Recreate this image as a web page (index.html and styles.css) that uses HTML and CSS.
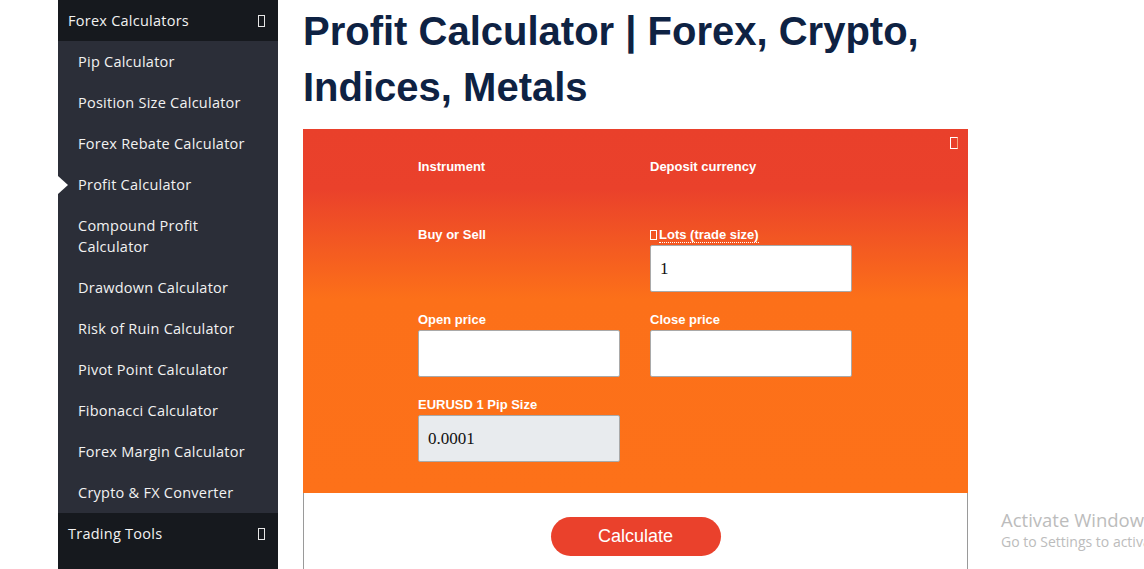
FILE: index.html
```html
<!DOCTYPE html>
<html lang="en">
<head>
<meta charset="utf-8">
<title>Profit Calculator</title>
<link rel="stylesheet" href="styles.css">
</head>
<body>
<div class="page">
  <aside class="sidebar">
    <div class="side-head"><span>Forex Calculators</span><span class="tofu"></span></div>
    <ul class="side-list">
      <li class="side-item">Pip Calculator</li>
      <li class="side-item">Position Size Calculator</li>
      <li class="side-item">Forex Rebate Calculator</li>
      <li class="side-item active">Profit Calculator</li>
      <li class="side-item">Compound Profit Calculator</li>
      <li class="side-item">Drawdown Calculator</li>
      <li class="side-item">Risk of Ruin Calculator</li>
      <li class="side-item">Pivot Point Calculator</li>
      <li class="side-item">Fibonacci Calculator</li>
      <li class="side-item">Forex Margin Calculator</li>
      <li class="side-item">Crypto &amp; FX Converter</li>
    </ul>
    <div class="side-head side-head-last"><span>Trading Tools</span><span class="tofu"></span></div>
  </aside>
  <main class="main">
    <h1 class="title">Profit Calculator | Forex, Crypto, Indices, Metals</h1>
    <section class="calc">
      <div class="calc-top">
        <span class="corner-icon"></span>
        <div class="form">
          <div class="field"><label class="lbl">Instrument</label><div class="placeholder"></div></div>
          <div class="field"><label class="lbl">Deposit currency</label><div class="placeholder"></div></div>
          <div class="field"><label class="lbl">Buy or Sell</label></div>
          <div class="field"><label class="lbl"><span class="tofu-sm"></span><span class="dotted">Lots (trade size)</span></label><input class="inp" type="text" value="1"></div>
          <div class="field"><label class="lbl">Open price</label><input class="inp" type="text" value=""></div>
          <div class="field"><label class="lbl">Close price</label><input class="inp" type="text" value=""></div>
          <div class="field"><label class="lbl">EURUSD 1 Pip Size</label><input class="inp inp-ro" type="text" value="0.0001" readonly></div>
        </div>
      </div>
      <div class="calc-bottom">
        <button class="btn" type="button">Calculate</button>
      </div>
    </section>
  </main>
</div>
<div class="watermark">
  <div class="wm-1">Activate Windows</div>
  <div class="wm-2">Go to Settings to activate Windows.</div>
</div>
</body>
</html>
```
FILE: styles.css
```css
html, body {
  margin: 0;
  padding: 0;
  background: #ffffff;
  overflow: hidden;
  height: 569px;
}
.page {
  display: flex;
  gap: 25px;
  padding-left: 58px;
  height: 569px;
}
.sidebar {
  width: 220px;
  flex: 0 0 220px;
  display: flex;
  flex-direction: column;
  background: #2b2e38;
  font-family: "Open Sans", sans-serif;
  font-size: 14.5px;
  letter-spacing: 0.25px;
  color: #f2f2f2;
}
.side-head {
  background: #16191e;
  height: 41px;
  line-height: 21px;
  display: flex;
  align-items: center;
  justify-content: space-between;
  padding: 0 13px 0 10px;
  box-sizing: border-box;
  flex: 0 0 auto;
}
.side-head-last {
  flex: 1 1 auto;
  align-items: flex-start;
  padding-top: 10px;
}
.side-head-last .tofu {
  margin-top: 5px;
}
.tofu {
  display: inline-block;
  width: 5px;
  height: 10px;
  border: 1px solid #e6e6e6;
}
.side-list {
  list-style: none;
  margin: 0;
  padding: 0;
}
.side-item {
  position: relative;
  padding: 10px 30px 10px 20px;
  line-height: 21px;
}
.side-item.active::before {
  content: "";
  position: absolute;
  left: 0;
  top: 50%;
  margin-top: -9px;
  border-top: 9px solid transparent;
  border-bottom: 9px solid transparent;
  border-left: 10px solid #ffffff;
}
.main {
  width: 665px;
  flex: 0 0 665px;
}
.title {
  margin: 3px 0 14px 0;
  font-family: "Liberation Sans", Arial, sans-serif;
  font-weight: bold;
  font-size: 40px;
  line-height: 56px;
  color: #0e2243;
}
.calc {
  width: 665px;
}
.calc-top {
  position: relative;
  background: linear-gradient(to bottom, #e9402b 0px, #ea412b 60px, #fc7019 170px, #fd7119 100%);
  padding: 29px 0 31px 0;
}
.corner-icon {
  position: absolute;
  right: 10px;
  top: 8px;
  width: 6px;
  height: 10px;
  border: 1px solid #ffffff;
  border-right-color: #f7a37a;
}
.form {
  width: 434px;
  margin: 0 0 0 115px;
  display: grid;
  grid-template-columns: 202px 202px;
  column-gap: 30px;
  row-gap: 19px;
}
.field {
  display: flex;
  flex-direction: column;
}
.lbl {
  font-family: "Liberation Sans", Arial, sans-serif;
  font-weight: bold;
  font-size: 13px;
  line-height: 17px;
  color: #ffffff;
  margin-bottom: 2px;
}
.placeholder {
  height: 30px;
}
.tofu-sm {
  display: inline-block;
  width: 5px;
  height: 8px;
  border: 1px solid #ffffff;
  margin-right: 2px;
  vertical-align: -1px;
}
.dotted {
  border-bottom: 1px dotted #ffffff;
}
.inp {
  box-sizing: border-box;
  width: 202px;
  height: 47px;
  border: 1px solid #a9a9a9;
  border-radius: 2px;
  background: #ffffff;
  padding: 0 9px;
  font-family: "Liberation Serif", "Times New Roman", serif;
  font-size: 17px;
  color: #111111;
  outline: none;
}
.inp-ro {
  background: #e8ebee;
}
.calc-bottom {
  background: #ffffff;
  border-left: 1px solid #9a9a9a;
  border-right: 1px solid #9a9a9a;
  padding-top: 24px;
  height: 80px;
  display: flex;
  justify-content: center;
  align-items: flex-start;
}
.btn {
  width: 170px;
  height: 39px;
  border: none;
  border-radius: 20px;
  background: #ea412c;
  color: #ffffff;
  font-family: "Liberation Sans", Arial, sans-serif;
  font-size: 18px;
  padding: 0;
  cursor: pointer;
}
.watermark {
  position: absolute;
  left: 1001px;
  top: 508px;
  white-space: nowrap;
  font-family: "Open Sans", "Noto Sans", sans-serif;
  color: #bcbcbc;
}
.wm-1 {
  font-size: 18.5px;
  line-height: 24px;
}
.wm-2 {
  font-size: 14px;
  line-height: 20px;
}
```
